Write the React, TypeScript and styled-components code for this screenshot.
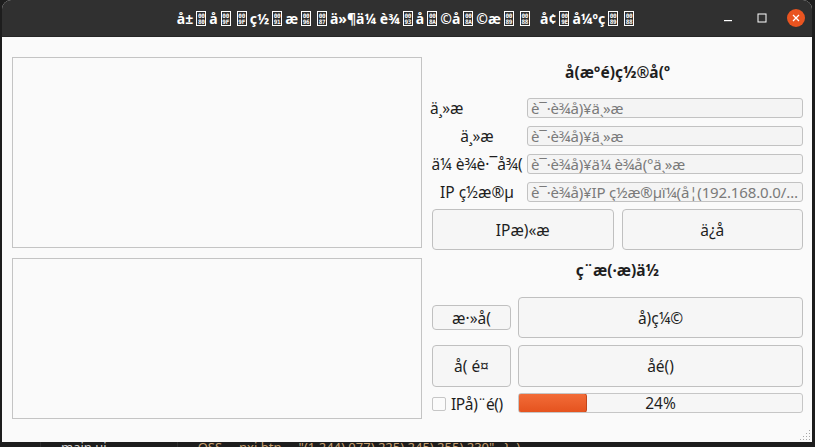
import React from "react";
import styled, { createGlobalStyle } from "styled-components";

const GlobalStyle = createGlobalStyle`
  html, body { margin: 0; padding: 0; background: #1d1d1d; overflow: hidden; }
  body { font-family: "Noto Sans", "DejaVu Sans", sans-serif; }
  #root { width: 815px; height: 447px; }
`;

const Page = styled.div`
  width: 815px;
  height: 447px;
  display: flex;
  flex-direction: column;
  background: #1d1d1d;
  overflow: hidden;
`;

const Window = styled.div`
  margin-left: 2px;
  width: 810px;
  display: flex;
  flex-direction: column;
  border-radius: 9px 9px 0 0;
  overflow: hidden;
  background: #fafafa;
`;

const TitleBar = styled.div`
  height: 37px;
  background: #303030;
  border-bottom: 1px solid #262626;
  box-sizing: border-box;
  display: grid;
  grid-template-columns: 1fr auto 1fr;
  align-items: center;
  color: #ffffff;
`;

const Title = styled.div`
  grid-column: 2;
  font-family: "Noto Sans", "DejaVu Sans", sans-serif;
  font-weight: 700;
  font-size: 14px;
  line-height: 17px;
  white-space: pre;
`;

const Hex = styled.span`
  display: inline-flex;
  flex-direction: column;
  align-items: center;
  justify-content: center;
  gap: 1px;
  vertical-align: middle;
  box-sizing: border-box;
  width: 10px;
  min-width: 10px;
  height: 15px;
  margin: -2px 3px 0;
  border: 1px solid #ffffff;
  font-family: "DejaVu Sans Mono", monospace;
  font-size: 6px;
  line-height: 5px;
  font-weight: 700;
  letter-spacing: -0.3px;
  color: #ffffff;
`;

const Controls = styled.div`
  grid-column: 3;
  justify-self: end;
  display: flex;
  align-items: center;
  gap: 16px;
  padding-right: 7px;
`;

const CtrlBtn = styled.div`
  width: 18px;
  height: 18px;
  display: flex;
  align-items: center;
  justify-content: center;
`;

const CloseBtn = styled(CtrlBtn)`
  border-radius: 50%;
  background: #e95420;
`;

const Content = styled.div`
  position: relative;
  height: 405px;
  box-sizing: border-box;
  padding: 20px 9px 0 10px;
  display: flex;
  gap: 10px;
  color: #1e1e1e;
  font-size: 15.5px;
`;

const LeftColumn = styled.div`
  width: 410px;
  display: flex;
  flex-direction: column;
  gap: 10px;
`;

const Panel = styled.div<{ $h: number }>`
  height: ${(p) => p.$h}px;
  box-sizing: border-box;
  border: 1px solid #c4c4c4;
  background: #fafafa;
`;

const RightColumn = styled.div`
  width: 371px;
  display: flex;
  flex-direction: column;
`;

const SectionTitle = styled.div<{ $h: number; $mb: number }>`
  height: ${(p) => p.$h}px;
  margin-bottom: ${(p) => p.$mb}px;
  display: flex;
  align-items: center;
  justify-content: center;
  font-weight: 700;
  white-space: pre;
`;

const FormRow = styled.div`
  display: grid;
  grid-template-columns: 90px 1fr;
  column-gap: 5px;
  height: 20px;
  margin-bottom: 8px;
  align-items: center;
`;

const Label = styled.div<{ $align: "left" | "center" }>`
  white-space: pre;
  display: flex;
  justify-content: ${(p) => (p.$align === "center" ? "center" : "flex-start")};
  margin-left: ${(p) => (p.$align === "center" ? "0" : "-2px")};
`;

const Field = styled.input`
  box-sizing: border-box;
  width: 100%;
  height: 20px;
  border: 1px solid #c2c2c2;
  border-radius: 3px;
  background: #f4f4f4;
  padding: 0 3px;
  font-family: "Noto Sans", "DejaVu Sans", sans-serif;
  font-size: 15px;
  letter-spacing: -0.15px;
  text-overflow: ellipsis;
  outline: none;
  &::placeholder {
    color: #7a7a7a;
  }
`;

const ButtonPair = styled.div`
  display: grid;
  grid-template-columns: 1fr 1fr;
  column-gap: 8px;
  height: 41px;
`;

const Button = styled.button<{ $h?: number }>`
  box-sizing: border-box;
  height: ${(p) => (p.$h ? `${p.$h}px` : "100%")};
  align-self: center;
  border: 1px solid #c0c0c0;
  border-radius: 4px;
  background: #f6f6f6;
  color: #1e1e1e;
  font-family: "Noto Sans", "DejaVu Sans", sans-serif;
  font-size: 15.5px;
  white-space: pre;
  padding: 0;
`;

const ActionRow = styled.div<{ $h: number; $mb: number }>`
  display: grid;
  grid-template-columns: 79px 1fr;
  column-gap: 7px;
  height: ${(p) => p.$h}px;
  margin-bottom: ${(p) => p.$mb}px;
  align-items: stretch;
`;

const CheckWrap = styled.label`
  display: flex;
  align-items: center;
  gap: 5px;
  white-space: pre;
  letter-spacing: -0.4px;
`;

const CheckBox = styled.span`
  width: 14px;
  height: 14px;
  flex-shrink: 0;
  box-sizing: border-box;
  border: 1px solid #c6c6c6;
  border-radius: 2px;
  background: #fbfbfb;
`;

const Progress = styled.div`
  position: relative;
  box-sizing: border-box;
  height: 20px;
  border: 1px solid #c6c6c6;
  border-radius: 3px;
  background: #f6f6f6;
  display: flex;
  align-items: center;
  justify-content: center;
  overflow: hidden;
`;

const Chunk = styled.div`
  position: absolute;
  left: -1px;
  top: -1px;
  bottom: -1px;
  box-sizing: border-box;
  border: 1px solid #c2451a;
  border-radius: 3px;
  background: linear-gradient(#f26c38, #e5531f);
`;

const ProgressText = styled.span`
  position: relative;
`;

const Grip = styled.svg`
  position: absolute;
  right: 1px;
  bottom: 1px;
`;

const Desktop = styled.div`
  height: 5px;
  display: flex;
  align-items: flex-start;
  overflow: hidden;
  font-family: "Noto Sans", sans-serif;
  font-size: 13px;
  line-height: 13px;
  color: #cfcfcf;
`;

const DeskDivider = styled.div<{ $w: number }>`
  width: ${(p) => p.$w}px;
  height: 5px;
  border-right: 1px solid #2e2e2e;
  flex-shrink: 0;
`;

const DeskText = styled.span<{ $pad: number; $color: string }>`
  padding-left: ${(p) => p.$pad}px;
  color: ${(p) => p.$color};
  white-space: pre;
  margin-top: -1px;
`;

const H = ({ c }: { c: string }) => (
  <Hex>
    <span>00</span>
    <span>{c}</span>
  </Hex>
);

const progress = 24;
const codeLine = 'QSS     nxi btn...  "(1,244) 077) 225) 245) 255) 230"   }  )';

export default function App() {
  return (
    <>
      <GlobalStyle />
      <Page>
        <Window>
          <TitleBar>
            <Title>
              å±<H c="80" />å<H c="9F" /><H c="9F" />ç½<H c="91" />æ<H c="96" /><H c="87" />ä»¶ä¼ è¾<H c="93" />å<H c="8A" />©å<H c="8A" />©æ<H c="89" /><H c="88" />{"  "}å¢<H c="9E" />å¼ºç<H c="89" /><H c="88" />
            </Title>
            <Controls>
              <CtrlBtn>
                <svg width="10" height="10" viewBox="0 0 10 10">
                  <rect x="1" y="7" width="8" height="1.2" fill="#fff" />
                </svg>
              </CtrlBtn>
              <CtrlBtn>
                <svg width="10" height="10" viewBox="0 0 10 10">
                  <rect x="1" y="1" width="8" height="8" fill="none" stroke="#fff" strokeWidth="1" />
                </svg>
              </CtrlBtn>
              <CloseBtn>
                <svg width="10" height="10" viewBox="0 0 10 10">
                  <path d="M2 2 L8 8 M8 2 L2 8" stroke="#fff" strokeWidth="1.3" />
                </svg>
              </CloseBtn>
            </Controls>
          </TitleBar>
          <Content>
            <LeftColumn>
              <Panel $h={191} />
              <Panel $h={161} />
            </LeftColumn>
            <RightColumn>
              <SectionTitle $h={30} $mb={10}>å(æ°é)ç½®å(º</SectionTitle>
              <FormRow>
                <Label $align="left">ä¸»æ</Label>
                <Field placeholder="è¯·è¾å)¥ä¸»æ" readOnly />
              </FormRow>
              <FormRow>
                <Label $align="center">ä¸»æ</Label>
                <Field placeholder="è¯·è¾å)¥ä¸»æ" readOnly />
              </FormRow>
              <FormRow>
                <Label $align="center">ä¼ è¾è·¯å¾(</Label>
                <Field placeholder="è¯·è¾å)¥ä¼ è¾å(°ä¸»æ" readOnly />
              </FormRow>
              <FormRow>
                <Label $align="center">IP ç½æ®µ</Label>
                <Field placeholder="è¯·è¾å)¥IP ç½æ®µï¼(å¦(192.168.0.0/24ï¼)" readOnly />
              </FormRow>
              <ButtonPair>
                <Button>IPæ)«æ</Button>
                <Button>ä¿å</Button>
              </ButtonPair>
              <SectionTitle $h={40} $mb={7}>ç¨æ(·æ)ä½</SectionTitle>
              <ActionRow $h={41} $mb={7}>
                <Button $h={25}>æ·»å(</Button>
                <Button>å)ç¼©</Button>
              </ActionRow>
              <ActionRow $h={42} $mb={6}>
                <Button>å( é¤</Button>
                <Button>åé()</Button>
              </ActionRow>
              <ActionRow $h={20} $mb={0}>
                <CheckWrap>
                  <CheckBox />
                  IPå)¨é()
                </CheckWrap>
                <Progress>
                  <Chunk style={{ width: `calc(${progress}% + 1px)` }} />
                  <ProgressText>{progress}%</ProgressText>
                </Progress>
              </ActionRow>
            </RightColumn>
            <Grip width="12" height="12" viewBox="0 0 12 12">
              {[
                [10, 1], [7, 4], [10, 4], [4, 7], [7, 7], [10, 7], [1, 10], [4, 10], [7, 10], [10, 10],
              ].map(([x, y], i) => (
                <rect key={i} x={x} y={y} width="1" height="1" fill="#a8a8a8" />
              ))}
            </Grip>
          </Content>
        </Window>
        <Desktop>
          <DeskDivider $w={40} />
          <DeskText $pad={20} $color="#d0d0d0">main.ui</DeskText>
          <DeskDivider $w={70} />
          <DeskText $pad={20} $color="#c8a070">{codeLine}</DeskText>
        </Desktop>
      </Page>
    </>
  );
}
